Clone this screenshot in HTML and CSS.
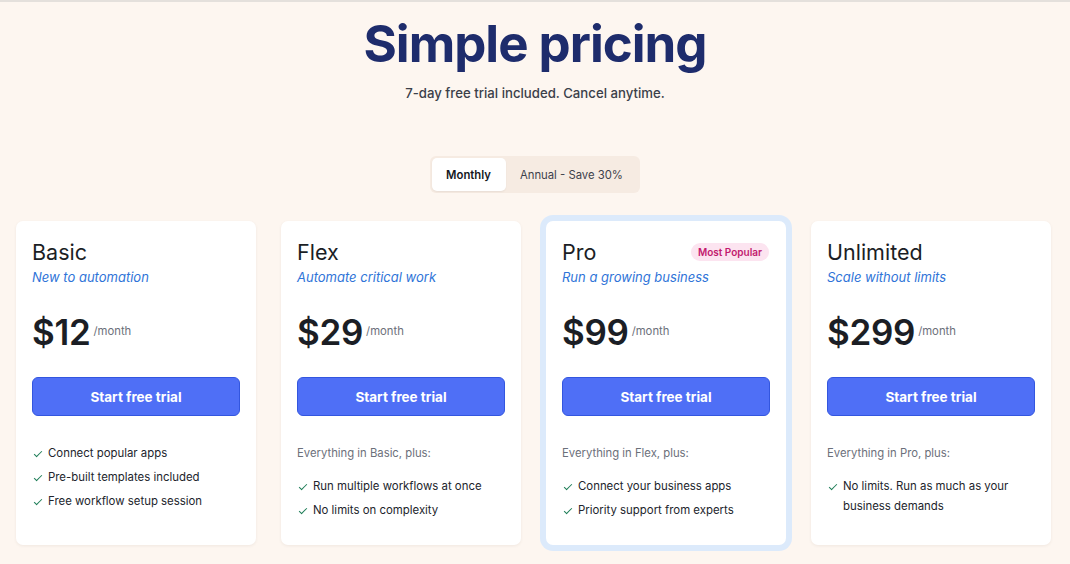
FILE: index.html
```html
<!DOCTYPE html>
<html lang="en">

<head>
    <meta charset="UTF-8">
    <meta name="viewport" content="width=device-width, initial-scale=1.0">
    <title>Pricing</title>
    <link rel="stylesheet" href="styles.css">
</head>

<body>
    <header class="intro">
        <h1>Simple pricing</h1>
        <p class="lead">7-day free trial included. Cancel anytime.</p>
    </header>

    <!-- billing period switch -->
    <div class="toggle">
        <button class="period active">Monthly</button>
        <button class="period">Annual - Save 30%</button>
    </div>

    <!-- plans -->
    <div class="plans">
        <div class="plan">
            <div class="plan-head">
                <h2>Basic</h2>
            </div>
            <p class="tagline">New to automation</p>
            <div class="price"><span class="amount">$12</span><span class="per">/month</span></div>
            <button class="trial">Start free trial</button>
            <ul class="features">
                <li>Connect popular apps</li>
                <li>Pre-built templates included</li>
                <li>Free workflow setup session</li>
            </ul>
        </div>

        <div class="plan">
            <div class="plan-head">
                <h2>Flex</h2>
            </div>
            <p class="tagline">Automate critical work</p>
            <div class="price"><span class="amount">$29</span><span class="per">/month</span></div>
            <button class="trial">Start free trial</button>
            <p class="includes">Everything in Basic, plus:</p>
            <ul class="features">
                <li>Run multiple workflows at once</li>
                <li>No limits on complexity</li>
            </ul>
        </div>

        <div class="plan popular">
            <div class="plan-head">
                <h2>Pro</h2>
                <span class="badge">Most Popular</span>
            </div>
            <p class="tagline">Run a growing business</p>
            <div class="price"><span class="amount">$99</span><span class="per">/month</span></div>
            <button class="trial">Start free trial</button>
            <p class="includes">Everything in Flex, plus:</p>
            <ul class="features">
                <li>Connect your business apps</li>
                <li>Priority support from experts</li>
            </ul>
        </div>

        <div class="plan">
            <div class="plan-head">
                <h2>Unlimited</h2>
            </div>
            <p class="tagline">Scale without limits</p>
            <div class="price"><span class="amount">$299</span><span class="per">/month</span></div>
            <button class="trial">Start free trial</button>
            <p class="includes">Everything in Pro, plus:</p>
            <ul class="features">
                <li>No limits. Run as much as your business demands</li>
            </ul>
        </div>
    </div>

    <script>
        // switch the active billing period
        let periods = document.querySelectorAll(".period")
        periods.forEach((btn) => {
            btn.addEventListener("click", () => {
                document.querySelector(".period.active").classList.remove("active")
                btn.classList.add("active")
            })
        })
    </script>
</body>

</html>
```

FILE: styles.css
```css
body {
    margin: 0;
    min-height: 100vh;
    background-color: #fdf6f0;
    border-top: 2px solid #e4e0dc;
    box-sizing: border-box;
    font-family: Inter, "Liberation Sans", sans-serif;
    color: #1b1e25;
    display: flex;
    flex-direction: column;
    align-items: center;
}

.intro {
    text-align: center;
}

h1 {
    margin: 12px 0 0;
    font-size: 51px;
    line-height: 60px;
    font-weight: 700;
    letter-spacing: -1px;
    color: #1e2c6c;
}

.lead {
    margin: 9px 0 0;
    font-size: 13.2px;
    line-height: 20px;
    font-weight: 500;
    color: #3b3f49;
}

.toggle {
    margin-top: 53px;
    display: flex;
    padding: 2px;
    background-color: #f6ebe2;
    border-radius: 6px;
}

.period {
    font-family: inherit;
    font-size: 11.3px;
    height: 33px;
    padding: 0 15px 0 14px;
    border: none;
    background: none;
    color: #3d414b;
    border-radius: 5px;
    cursor: pointer;
}

.period.active {
    background-color: white;
    color: #15181e;
    font-weight: 600;
    box-shadow: 0 1px 2px rgba(0, 0, 0, 0.06);
}

.plans {
    align-self: flex-start;
    margin: 28px 0 0 16px;
    display: grid;
    grid-template-columns: repeat(4, 240px);
    gap: 25px;
}

.plan {
    background-color: white;
    border-radius: 7px;
    padding: 17px 16px 21px;
    box-shadow: 0 1px 3px rgba(90, 70, 50, 0.08);
}

.plan.popular {
    box-shadow: 0 0 0 6px #dceafb, 0 2px 4px rgba(60, 90, 140, 0.12);
}

.plan-head {
    display: flex;
    justify-content: space-between;
    align-items: center;
}

h2 {
    margin: 0;
    font-size: 21.5px;
    line-height: 28px;
    font-weight: 400;
}

.badge {
    font-size: 10px;
    font-weight: 600;
    color: #c21a6e;
    background-color: #fce4f0;
    padding: 2px 7px;
    line-height: 14px;
    border-radius: 9px;
    margin-right: 1px;
}

.tagline {
    margin: 1px 0 0;
    font-size: 13px;
    line-height: 20px;
    font-style: italic;
    color: #2f74d8;
}

.price {
    margin-top: 25px;
    display: flex;
    align-items: center;
    gap: 3px;
}

.amount {
    font-size: 35px;
    line-height: 40px;
    font-weight: 600;
    letter-spacing: -0.3px;
}

.per {
    font-size: 11.3px;
    color: #6c707a;
    margin-bottom: 2px;
}

.trial {
    margin-top: 25px;
    width: 100%;
    height: 39px;
    font-family: inherit;
    font-size: 13.5px;
    font-weight: 700;
    color: white;
    background-color: #4f6ff6;
    border: 1px solid #3356df;
    border-radius: 6px;
    cursor: pointer;
}

.trial:hover {
    background-color: #4262ec;
}

.includes {
    margin: 27px 0 0;
    font-size: 11.3px;
    line-height: 20px;
    color: #6c707a;
}

.features {
    list-style: none;
    margin: 27px 0 0;
    padding: 0;
}

.includes + .features {
    margin-top: 13px;
}

.features li {
    position: relative;
    padding-left: 16px;
    font-size: 11.4px;
    line-height: 20px;
    margin-bottom: 4px;
    color: #22252c;
}

/* green tick drawn from two borders */
.features li::before {
    content: "";
    position: absolute;
    left: 4px;
    top: 6px;
    width: 3px;
    height: 7px;
    border-right: 1.3px solid #1d7d57;
    border-bottom: 1.3px solid #1d7d57;
    transform: rotate(45deg);
}
```
